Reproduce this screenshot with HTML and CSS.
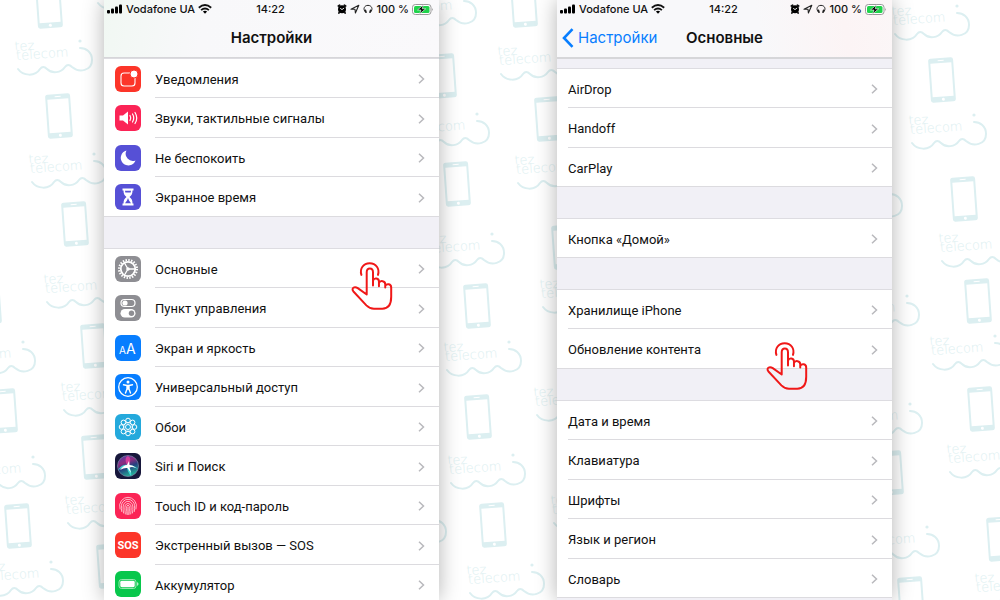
FILE: index.html
```html
<!DOCTYPE html>
<html lang="ru">
<head>
    <meta charset="UTF-8">
    <meta name="viewport" content="width=device-width, initial-scale=1.0">
    <title>Настройки iPhone</title>
    <link rel="stylesheet" href="styles.css">
</head>
<body>
    <!-- Background pattern -->
    <svg class="pattern" id="pattern" aria-hidden="true">
        <defs>
            <g id="device">
                <g transform="rotate(-4)">
                    <path fill-rule="evenodd" d="M-10-22H10Q12.500-22 12.500-19.500V19.500Q12.500 22 10 22H-10Q-12.500 22-12.500 19.500V-19.500Q-12.500-22-10-22ZM-10.500-17V16.500H10.500V-17ZM-3-20V-19H3V-20Z"/>
                    <circle cy="19.300" r="1.500" fill="#fff"/>
                </g>
            </g>
            <g id="logo">
                <path fill="none" stroke="#dceff1" stroke-width="2" stroke-linecap="round" d="M1 0C6 7 18 8 23 0Q26-4 30 0C35 5 44 4 48-2Q51-6 55-2C62 4 75 2 75-9C75-17 69-21 63-21"/>
                <circle cx="63" cy="-28" r="1.600"/>
                <text x="-1" y="-18" transform="rotate(-4)">tez</text>
                <text x="0" y="-9" transform="rotate(-4)">telecom</text>
            </g>
        </defs>
    </svg>

    <!-- Shared icons -->
    <svg class="sprite" aria-hidden="true">
        <symbol id="signal" viewBox="0 0 16 10">
            <rect x="0" y="6" width="3" height="3.500" rx="1"/>
            <rect x="4" y="4.500" width="3" height="5" rx="1"/>
            <rect x="8" y="2.500" width="3" height="7" rx="1"/>
            <rect x="12" y="0.500" width="3" height="9" rx="1"/>
        </symbol>
        <symbol id="wifi" viewBox="0 0 14 10">
            <path fill="none" stroke="#111" stroke-width="1.800" d="M.8 3.700Q7-1.700 13.200 3.700M3.100 6.200Q7 2.700 10.900 6.200"/>
            <path d="M4.900 7.600Q7 5.900 9.100 7.600L7 9.800Z"/>
        </symbol>
        <symbol id="alarm" viewBox="0 0 10 10">
            <circle cx="5" cy="5.300" r="4"/>
            <path stroke="#111" stroke-width="1.800" stroke-linecap="round" d="M1.400 2L2.600 1.200M8.600 2L7.400 1.200M2.400 8.400L1.900 9M7.600 8.400L8.100 9"/>
            <path fill="none" stroke="#fff" stroke-width=".9" d="M3.200 4.300L5 5.600L7.100 4"/>
        </symbol>
        <symbol id="location" viewBox="0 0 10 10">
            <path fill="none" stroke="#222" stroke-width="1.100" stroke-linejoin="round" d="M1 5.300L8.800 1.300L5.400 9L5 5.300Z"/>
        </symbol>
        <symbol id="headphones" viewBox="0 0 11 10">
            <path fill="none" stroke="#222" stroke-width="1.100" d="M2.800 8.500C-.5 5 1.500 1 5.500 1S11.500 5 8.200 8.500"/>
            <path stroke="#222" stroke-width="1.800" stroke-linecap="round" d="M2.700 6.500L3.300 8.500M8.300 6.500L7.700 8.500"/>
        </symbol>
        <symbol id="battery" viewBox="0 0 22 11">
            <rect x=".5" y=".5" width="18.500" height="10" rx="2.800" fill="#fff" stroke="#999"/>
            <rect x="2" y="2" width="15.500" height="7" rx="1.500" fill="#1fd34b"/>
            <path d="M20 4Q21.500 5.500 20 7Z" fill="#888"/>
            <path d="M11.300 1L5.500 6H9L7.500 10L13.700 4.800H10.200Z" stroke="#fff" stroke-width=".6"/>
        </symbol>
        <symbol id="chevron" viewBox="0 0 7 10">
            <path fill="none" stroke="#b9b9bd" stroke-width="1.500" d="M1 .8L5.500 5L1 9.200"/>
        </symbol>
        <symbol id="tap" viewBox="34 35 126 145">
            <g fill="none" stroke="#f01818" stroke-width="6" stroke-linecap="round" stroke-linejoin="round">
                <path d="M65 74C59 55 71 39 90 39S121 55 115 74"/>
                <path d="M81 133V66C81 51 100 51 100 66V106M100 91C104 81 118 84 118 94V108M118 99C122 89 137 92 137 102V112M137 107C142 99 155 101 155 112V140C155 162 146 176 128 176H103C93 176 87 173 80 166L41 124C33 114 44 107 54 114L81 133"/>
            </g>
        </symbol>
    </svg>

    <main class="screens">
        <section class="phone">
            <header class="header header-green">
                <div class="status">
                    <div class="status-left">
                        <svg class="i-signal"><use href="#signal"/></svg>
                        <span>Vodafone UA</span>
                        <svg class="i-wifi"><use href="#wifi"/></svg>
                    </div>
                    <span>14:22</span>
                    <div class="status-right">
                        <svg class="i-small"><use href="#alarm"/></svg>
                        <svg class="i-small"><use href="#location"/></svg>
                        <svg class="i-small"><use href="#headphones"/></svg>
                        <span>100 %</span>
                        <svg class="i-battery"><use href="#battery"/></svg>
                    </div>
                </div>
                <div class="navbar">
                    <h1>Настройки</h1>
                </div>
            </header>

            <ul class="group">
                <li><a class="row" href="#">
                    <svg class="icon red" viewBox="0 0 26 26"><rect x="6" y="7" width="14" height="13" rx="3" fill="none" stroke="#fff" stroke-width="1.100"/><circle cx="19" cy="8" r="4" fill="#fff" stroke="#fc3529"/></svg>
                    <span class="label">Уведомления<svg class="chevron"><use href="#chevron"/></svg></span>
                </a></li>
                <li><a class="row" href="#">
                    <svg class="icon pink" viewBox="0 0 26 26"><path fill="#fff" d="M4.500 10.500H8L13 6.500V19.500L8 15.500H4.500Z"/><path fill="none" stroke="#fff" stroke-width="1.200" stroke-linecap="round" d="M15 10.500Q16.500 13 15 15.500M17.500 9Q20 13 17.500 17M20 7.500Q23.500 13 20 18.500"/></svg>
                    <span class="label">Звуки, тактильные сигналы<svg class="chevron"><use href="#chevron"/></svg></span>
                </a></li>
                <li><a class="row" href="#">
                    <svg class="icon purple" viewBox="0 0 26 26"><path fill="#fff" d="M11.500 5.500A7.600 7.600 0 1 0 20.500 15.500A7.200 7.200 0 0 1 11.500 5.500Z"/></svg>
                    <span class="label">Не беспокоить<svg class="chevron"><use href="#chevron"/></svg></span>
                </a></li>
                <li><a class="row" href="#">
                    <svg class="icon purple" viewBox="0 0 26 26"><path fill="#fff" d="M7.500 4.500H18.500V6.500H17.500C17.500 10 16.500 11.500 14.500 13C16.500 14.500 17.500 16 17.500 19.500H18.500V21.500H7.500V19.500H8.500C8.500 16 9.500 14.500 11.500 13C9.500 11.500 8.500 10 8.500 6.500H7.500Z"/><path fill="#5650d6" d="M10 6.700H16L15.700 8.500H10.300ZM13 14L14 16.500L16 19.300H10L12 16.500Z"/></svg>
                    <span class="label">Экранное время<svg class="chevron"><use href="#chevron"/></svg></span>
                </a></li>
            </ul>

            <ul class="group">
                <li class="tapped"><a class="row" href="#">
                    <svg class="icon gray" viewBox="0 0 26 26"><circle cx="13" cy="13" r="9" fill="none" stroke="#fff" stroke-width="2" stroke-dasharray="1.450 1.377"/><circle cx="13" cy="13" r="7.200" fill="none" stroke="#fff" stroke-width="1.800"/><path stroke="#fff" stroke-width="1.300" d="M13 13H20M13 13L9.500 7M13 13L9.500 19"/><circle cx="13" cy="13" r="1.800" fill="#fff"/></svg>
                    <span class="label">Основные<svg class="chevron"><use href="#chevron"/></svg></span>
                </a><svg class="tap tap-settings"><use href="#tap"/></svg></li>
                <li><a class="row" href="#">
                    <svg class="icon gray" viewBox="0 0 26 26"><rect x="6" y="4.500" width="14" height="7" rx="3.500" fill="none" stroke="#fff" stroke-width="1.200"/><circle cx="10" cy="8" r="2.600" fill="#fff"/><rect x="5.500" y="14" width="15" height="8.500" rx="4.250" fill="#fff"/><circle cx="16.500" cy="18.250" r="2.700" fill="#8e8e93"/></svg>
                    <span class="label">Пункт управления<svg class="chevron"><use href="#chevron"/></svg></span>
                </a></li>
                <li><a class="row" href="#">
                    <svg class="icon blue" viewBox="0 0 26 26"><text class="aa" x="4" y="18.500"><tspan class="aa-small">A</tspan>A</text></svg>
                    <span class="label">Экран и яркость<svg class="chevron"><use href="#chevron"/></svg></span>
                </a></li>
                <li><a class="row" href="#">
                    <svg class="icon blue" viewBox="0 0 26 26"><circle cx="13" cy="13" r="9.300" fill="none" stroke="#fff" stroke-width="1.300"/><circle cx="13" cy="8" r="1.500" fill="#fff"/><path fill="none" stroke="#fff" stroke-width="1.400" stroke-linecap="round" stroke-linejoin="round" d="M8.500 10.800L12 11.500H14L17.500 10.800M12 11.500V15L10.500 19M14 11.500V15L15.500 19M12.500 12V15H13.500V12"/></svg>
                    <span class="label">Универсальный доступ<svg class="chevron"><use href="#chevron"/></svg></span>
                </a></li>
                <li><a class="row" href="#">
                    <svg class="icon cyan" viewBox="0 0 26 26"><g fill="none" stroke="#fff" stroke-width="1"><circle cx="13" cy="13" r="2.500"/><circle cx="13" cy="6.500" r="2.300"/><circle cx="17.600" cy="8.400" r="2.300"/><circle cx="19.500" cy="13" r="2.300"/><circle cx="17.600" cy="17.600" r="2.300"/><circle cx="13" cy="19.500" r="2.300"/><circle cx="8.400" cy="17.600" r="2.300"/><circle cx="6.500" cy="13" r="2.300"/><circle cx="8.400" cy="8.400" r="2.300"/><circle cx="13" cy="13" r="4.300" stroke-width=".8"/></g></svg>
                    <span class="label">Обои<svg class="chevron"><use href="#chevron"/></svg></span>
                </a></li>
                <li><a class="row" href="#">
                    <svg class="icon navy" viewBox="0 0 26 26">
                        <defs>
                            <linearGradient id="siri" x1="0" y1="0" x2=".4" y2="1"><stop offset="0" stop-color="#4a3fb0"/><stop offset=".4" stop-color="#8d2c80"/><stop offset=".65" stop-color="#24407f"/><stop offset="1" stop-color="#23a595"/></linearGradient>
                        </defs>
                        <circle cx="13" cy="13" r="10.500" fill="url(#siri)" stroke="#7b86a8" stroke-width=".7"/>
                        <path fill="#e544a0" d="M12 12C10 8 10 4 13 3Q17 5 14 12Z" opacity=".8"/>
                        <path fill="#3ed6d3" d="M3 17Q7 11 13 12Q19 12 23 16Q17 13 14 14Q17 18 16 23Q12 18 12 14Q8 14 3 17Z"/>
                        <path fill="#fff" d="M5 17Q9 12 12 12L14 8L14.500 12Q18 12 21 15Q17 13.500 14.500 14.500L16 20L12.500 15Q9 14.500 5 17Z"/>
                    </svg>
                    <span class="label">Siri и Поиск<svg class="chevron"><use href="#chevron"/></svg></span>
                </a></li>
                <li><a class="row" href="#">
                    <svg class="icon pink" viewBox="0 0 26 26"><g fill="none" stroke="#ffc9d4" stroke-width=".9" stroke-linecap="round"><path d="M5 16Q3.500 11 6.500 7.500Q9.500 4.300 13 4.300T19.500 7.500Q22.500 11 21 16"/><path d="M6.700 18.500Q5.500 11 8 8.700Q10 6.300 13 6.300T18 8.700Q20.500 11 19.300 18.500"/><path d="M8.500 20Q7.300 12.500 9.300 10.300Q11 8.300 13 8.300T16.700 10.300Q18.700 12.500 17.500 20"/><path d="M10.300 21Q9.300 13 10.700 11.600Q13 9.200 15.300 11.600Q16.700 13 15.700 21"/><path d="M12 21.500Q11.200 14 12 12.800Q13 11.800 14 12.800Q14.800 14 14 21.500M13 14.500V21.500"/></g></svg>
                    <span class="label">Touch ID и код-пароль<svg class="chevron"><use href="#chevron"/></svg></span>
                </a></li>
                <li><a class="row" href="#">
                    <svg class="icon red" viewBox="0 0 26 26"><text class="sos" x="13" y="17">SOS</text></svg>
                    <span class="label">Экстренный вызов — SOS<svg class="chevron"><use href="#chevron"/></svg></span>
                </a></li>
                <li><a class="row" href="#">
                    <svg class="icon green" viewBox="0 0 26 26"><rect x="4" y="8.500" width="17" height="9" rx="2.500" fill="none" stroke="#a5ecb9" stroke-width=".9"/><rect x="5.300" y="9.800" width="14.400" height="6.400" rx="1.400" fill="#fff"/><path fill="#fff" d="M22.300 11Q24.500 13 22.300 15Z"/></svg>
                    <span class="label">Аккумулятор<svg class="chevron"><use href="#chevron"/></svg></span>
                </a></li>
            </ul>
        </section>

        <section class="phone">
            <header class="header header-pink">
                <div class="status">
                    <div class="status-left">
                        <svg class="i-signal"><use href="#signal"/></svg>
                        <span>Vodafone UA</span>
                        <svg class="i-wifi"><use href="#wifi"/></svg>
                    </div>
                    <span>14:22</span>
                    <div class="status-right">
                        <svg class="i-small"><use href="#alarm"/></svg>
                        <svg class="i-small"><use href="#location"/></svg>
                        <svg class="i-small"><use href="#headphones"/></svg>
                        <span>100 %</span>
                        <svg class="i-battery"><use href="#battery"/></svg>
                    </div>
                </div>
                <div class="navbar">
                    <a class="back" href="#"><svg viewBox="0 0 12 20"><path fill="none" stroke="#087eff" stroke-width="2.600" d="M10.500 1.200L2 10L10.500 18.800"/></svg>Настройки</a>
                    <h1>Основные</h1>
                </div>
            </header>

            <ul class="group group-first">
                <li><a class="row" href="#"><span class="label">AirDrop<svg class="chevron"><use href="#chevron"/></svg></span></a></li>
                <li><a class="row" href="#"><span class="label">Handoff<svg class="chevron"><use href="#chevron"/></svg></span></a></li>
                <li><a class="row" href="#"><span class="label">CarPlay<svg class="chevron"><use href="#chevron"/></svg></span></a></li>
            </ul>
            <ul class="group">
                <li><a class="row" href="#"><span class="label">Кнопка «Домой»<svg class="chevron"><use href="#chevron"/></svg></span></a></li>
            </ul>
            <ul class="group">
                <li><a class="row" href="#"><span class="label">Хранилище iPhone<svg class="chevron"><use href="#chevron"/></svg></span></a></li>
                <li class="tapped"><a class="row" href="#"><span class="label">Обновление контента<svg class="chevron"><use href="#chevron"/></svg></span></a><svg class="tap tap-update"><use href="#tap"/></svg></li>
            </ul>
            <ul class="group">
                <li><a class="row" href="#"><span class="label">Дата и время<svg class="chevron"><use href="#chevron"/></svg></span></a></li>
                <li><a class="row" href="#"><span class="label">Клавиатура<svg class="chevron"><use href="#chevron"/></svg></span></a></li>
                <li><a class="row" href="#"><span class="label">Шрифты<svg class="chevron"><use href="#chevron"/></svg></span></a></li>
                <li><a class="row" href="#"><span class="label">Язык и регион<svg class="chevron"><use href="#chevron"/></svg></span></a></li>
                <li><a class="row" href="#"><span class="label">Словарь<svg class="chevron"><use href="#chevron"/></svg></span></a></li>
            </ul>
        </section>
    </main>

    <script src="pattern.js"></script>
</body>
</html>
```
FILE: styles.css
```css
* {
    box-sizing: border-box;
}

body {
    margin: 0;
    background: #fff;
    color: #111;
    font-family: Inter, "Noto Sans", sans-serif;
    font-size: 13px;
    overflow: hidden;
}

a {
    color: inherit;
    text-decoration: none;
}

.pattern {
    position: absolute;
    top: 0;
    left: 0;
    width: 100%;
    height: 100%;
    fill: #dceff1;
    font-family: "DejaVu Sans", sans-serif;
    font-weight: 200;
    font-size: 13px;
}

.sprite {
    display: none;
}

.screens {
    position: relative;
    display: flex;
    gap: 118px;
    height: 100vh;
    padding: 0 108px 0 104px;
}

.phone {
    flex: 1;
    min-width: 0;
    background: #f1f0f6;
    box-shadow: 0 0 20px rgba(0, 0, 0, 0.3);
    overflow: hidden;
}

/* Header */
.header {
    height: 59px;
    border-bottom: 2px solid #d6d6d9;
}

.header-green {
    background: linear-gradient(100deg, #f1f8f3, #f8f8fa 30%, #faf9fb);
}

.header-pink {
    background: linear-gradient(80deg, #f8f8fa 60%, #fcf4f5 85%, #fbf6f7);
}

.status {
    display: grid;
    grid-template-columns: 1fr auto 1fr;
    align-items: center;
    height: 18px;
    padding: 0 5px 0 3px;
    font-size: 11px;
    font-weight: 500;
}

.status-left,
.status-right {
    display: flex;
    align-items: center;
    gap: 3px;
    white-space: nowrap;
}

.status-right {
    justify-content: flex-end;
}

.i-signal {
    width: 16px;
    height: 10px;
}

.i-wifi {
    width: 14px;
    height: 10px;
}

.i-small {
    width: 10px;
    height: 10px;
}

.i-battery {
    width: 22px;
    height: 11px;
}

.navbar {
    display: grid;
    grid-template-columns: 1fr auto 1fr;
    align-items: center;
    height: 39px;
}

.navbar h1 {
    grid-column: 2;
    margin: 0;
    font-size: 15px;
    font-weight: 600;
}

.back {
    display: flex;
    align-items: center;
    gap: 4px;
    padding-left: 5px;
    color: #087eff;
    font-size: 15px;
}

.back svg {
    width: 12px;
    height: 20px;
}

/* Lists */
.group {
    margin: 0 0 32px;
    padding: 0;
    list-style: none;
    background: #fff;
    box-shadow: 0 -1px #dddce1;
}

.group-first {
    margin-top: 10px;
}

.group li {
    height: 40px;
}

.group li:nth-child(odd) {
    height: 39px;
}

.row {
    display: flex;
    align-items: center;
    gap: 14px;
    height: 100%;
    padding-left: 11px;
}

.label {
    display: flex;
    flex: 1;
    align-items: center;
    justify-content: space-between;
    height: 100%;
    padding: 2px 14px 0 0;
    border-bottom: 1px solid #dcdbdf;
    font-family: Roboto, "Noto Sans", sans-serif;
    white-space: nowrap;
}

.group li:last-child .label {
    border-bottom: 0;
}

.group li:last-child {
    border-bottom: 1px solid #dcdbdf;
}

.chevron {
    width: 7px;
    height: 10px;
}

.icon {
    width: 26px;
    height: 26px;
    border-radius: 6px;
}

.red { background: #fc3529; }
.pink { background: #fb2456; }
.purple { background: #5650d6; }
.gray { background: #8e8e93; }
.blue { background: #087eff; }
.cyan { background: #24a9dc; }
.navy { background: #17173b; }
.green { background: #08c74c; }

.aa {
    fill: #fff;
    font-size: 14px;
}

.aa-small {
    font-size: 10px;
}

.sos {
    fill: #fff;
    font-family: Roboto, sans-serif;
    font-size: 11px;
    font-weight: 700;
    text-anchor: middle;
}

/* Tap pointer over a row */
.tapped {
    position: relative;
}

.tap {
    position: absolute;
    top: 13px;
    z-index: 1;
    width: 42px;
    height: 48px;
}

.tap-settings {
    right: 46px;
}

.tap-update {
    right: 84px;
}
```
FILE: pattern.js
```js
const devices = [
    [49, 6], [59, 116], [75, 224], [94, 346], [95, 457], [110, 566],
    [-12, 302], [4, 411], [18, 526],
    [524, 5], [443, 76], [457, 184], [548, 119], [477, 306], [478, 417], [493, 525], [565, 247],
    [942, 80], [964, 199], [978, 301], [981, 409], [890, 473], [1000, 539], [911, 599]
];

const logos = [
    [17, 69], [31, 182], [46, 302], [63, 410], [67, 523], [97, 3],
    [-40, 370], [-30, 485], [-12, 590],
    [401, 22], [500, 74], [414, 142], [517, 183], [429, 262], [542, 307],
    [446, 370], [536, 415], [450, 483], [553, 523], [469, 593], [371, 541],
    [894, 34], [911, 143], [827, 215], [941, 261], [844, 324], [932, 364],
    [847, 432], [949, 472], [864, 555], [977, 601]
];

const pattern = document.getElementById("pattern");

function place(id, points) {
    for (const [x, y] of points) {
        const use = document.createElementNS("http://www.w3.org/2000/svg", "use");
        use.setAttribute("href", "#" + id);
        use.setAttribute("x", x);
        use.setAttribute("y", y);
        pattern.appendChild(use);
    }
}

place("device", devices);
place("logo", logos);
```
